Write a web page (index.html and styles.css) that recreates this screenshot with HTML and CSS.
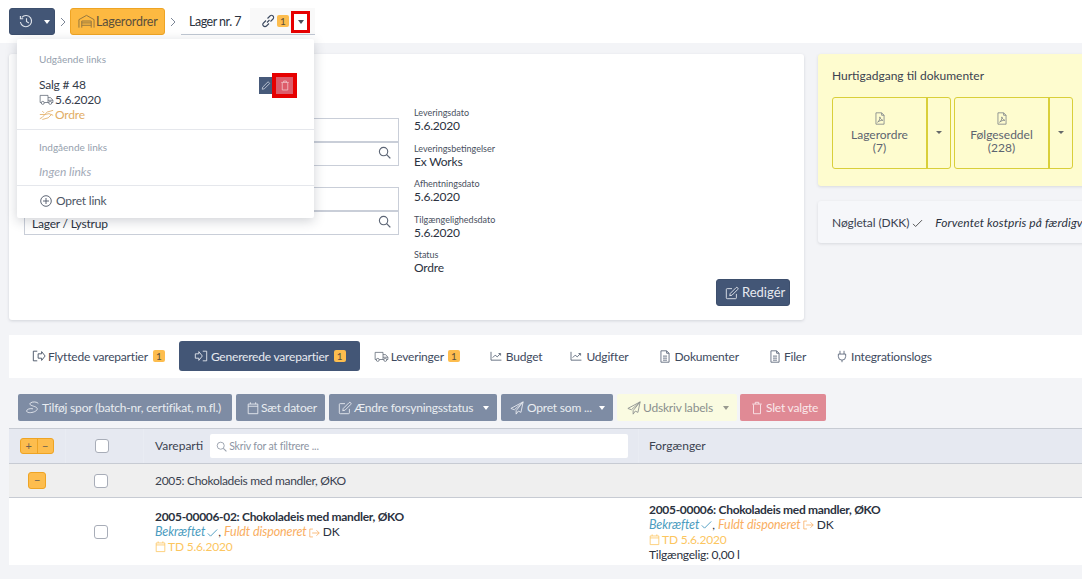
FILE: index.html
```html
<!DOCTYPE html>
<html lang="da">
<head>
<meta charset="utf-8">
<title>Lager nr. 7</title>
<link rel="stylesheet" href="styles.css">
</head>
<body>
<svg width="0" height="0" class="defs">
  <symbol id="i-edit" viewBox="0 0 16 16"><path d="M13 9v4.500a1 1 0 0 1-1 1H2.500a1 1 0 0 1-1-1V4a1 1 0 0 1 1-1H8M6 8.500l-.6 2.600 2.600-.6 6.500-6.500a1.300 1.300 0 0 0-2-2z" fill="none" stroke="currentColor"/></symbol>
  <symbol id="i-truck" viewBox="0 0 20 16"><path d="M3 12H1.500V2.500H12V12H7M12 5.500h3.500l3 3.500v3H17M12 12h1M12 9h6.500" fill="none" stroke="currentColor"/><circle cx="5" cy="12.500" r="2" fill="none" stroke="currentColor"/><circle cx="15" cy="12.500" r="2" fill="none" stroke="currentColor"/></symbol>
  <symbol id="i-cal" viewBox="0 0 14 16"><path d="M1.500 3.500h11v11h-11zM1.500 6h11M4 1.500v2M10 1.500v2" fill="none" stroke="currentColor"/></symbol>
  <symbol id="i-trash" viewBox="0 0 14 16"><path d="M3 4v10.500h8V4M1.500 3.500h11M5 3.500V1.500h4v2" fill="none" stroke="currentColor"/></symbol>
  <symbol id="i-plane" viewBox="0 0 16 16"><path d="M15 1 1 8.500l4 1.500L15 1 7 11v4l2.500-3.500 3 1.500z" fill="none" stroke="currentColor" stroke-linejoin="round"/></symbol>
  <symbol id="i-search" viewBox="0 0 14 14"><circle cx="6" cy="6" r="4.500" fill="none" stroke="currentColor" stroke-width="1.200"/><path d="m9.300 9.300 4 4" stroke="currentColor" stroke-width="1.400"/></symbol>
  <symbol id="i-pdf" viewBox="0 0 12 16"><path d="M1 1h7l3 3v11H1zM8 1v3h3M3 12.500c2-1 3-4 2.800-6.500.8 2.500 1.700 3.700 3.700 4.200-2.500 0-4.500.8-6.500 2.300z" fill="none" stroke="currentColor" stroke-width=".9"/></symbol>
  <symbol id="i-chart" viewBox="0 0 14 12"><path d="M1 1v10h12.500M3 8l3-3 2.500 2L12 3.500M10 3h2.500v2.500" fill="none" stroke="currentColor"/></symbol>
  <symbol id="i-doc" viewBox="0 0 12 16"><path d="M1 1h7l3 3v11H1zM8 1v3h3M3.500 7.500h5M3.500 10h5M3.500 12.500h5" fill="none" stroke="currentColor"/></symbol>
  <symbol id="i-check" viewBox="0 0 14 12"><path d="m1 6.500 3.500 3.500L13 1.500" fill="none" stroke="currentColor" stroke-width="1.200"/></symbol>
  <symbol id="i-exit" viewBox="0 0 14 12"><path d="M5 1H1v10h4M4 6h9M9.500 2.500 13 6 9.500 9.500" fill="none" stroke="currentColor"/></symbol>
  <symbol id="i-hands" viewBox="0 0 18 14"><path d="M1 12c4-1 5-5 9-8l7-2M4 13l7-2 4-4M1 7h6l5-1 5 2M6 5 4 3" fill="none" stroke="currentColor"/></symbol>
  <symbol id="i-chev" viewBox="0 0 6 10"><path d="m1 1 4 4-4 4" fill="none" stroke="currentColor"/></symbol>
</svg>

<header class="topbar">
  <button class="btn btn-dark history">
    <svg class="ico-16" viewBox="0 0 16 16"><path d="M3 3.500a6 6 0 1 1-1.500 5M1.500 2v3h3M8 4.500V8l2.500 1.500" fill="none" stroke="currentColor" stroke-width="1.200"/></svg>
    <span class="caret caret-white"></span>
  </button>
  <span class="chev"><svg class="ico-chev"><use href="#i-chev"/></svg></span>
  <button class="btn btn-orange">
    <svg class="ico-wh" viewBox="0 0 18 15"><path d="M1 14V5.500L9 1l8 4.500V14M4 14V7h10v7M4 9h10M4 11.500h10" fill="none" stroke="currentColor"/></svg>Lagerordrer
  </button>
  <span class="chev"><svg class="ico-chev"><use href="#i-chev"/></svg></span>
  <span class="crumb">Lager nr. 7</span>
  <span class="linktab">
    <svg class="ico-link" viewBox="0 0 14 14"><path d="M6 8.500 8.500 6M5 6.500 2.500 9a2.100 2.100 0 0 0 3 3L8 9.500M6.500 4.500 9 2a2.100 2.100 0 0 1 3 3L9.500 7.500" fill="none" stroke="currentColor" stroke-width="1.100"/></svg>
    <span class="badge">1</span>
    <span class="redbox-caret"><span class="caret caret-dark"></span></span>
  </span>
</header>

<div class="dropdown">
  <div class="dd-sec dd-out">
    <div class="dd-head">Udgående links</div>
    <div class="dd-item">
      <div class="dd-lines">
        <div>Salg # 48</div>
        <div class="dd-date"><svg class="ico-truck"><use href="#i-truck"/></svg>5.6.2020</div>
        <div class="dd-order"><svg class="ico-truck"><use href="#i-hands"/></svg>Ordre</div>
      </div>
      <div class="dd-actions">
        <span class="act act-edit"><svg class="ico-10" viewBox="0 0 12 12"><path d="M1.500 10.500 2 8l6.500-6.500 2 2L4 10z" fill="none" stroke="currentColor"/></svg></span>
        <span class="act act-del"><svg class="ico-10"><use href="#i-trash"/></svg></span>
      </div>
    </div>
  </div>
  <div class="dd-sec dd-in">
    <div class="dd-head">Indgående links</div>
    <div class="dd-none">Ingen links</div>
  </div>
  <div class="dd-create">
    <svg class="ico-12" viewBox="0 0 12 12"><circle cx="6" cy="6" r="5.300" fill="none" stroke="currentColor" stroke-width=".9"/><path d="M6 3v6M3 6h6" stroke="currentColor" stroke-width=".9"/></svg>Opret link
  </div>
</div>

<main class="page">
  <section class="top-row">
    <div class="card main-card">
      <div class="form-col">
        <div class="input-pair">
          <div class="input"></div>
          <div class="input search"><svg class="ico-search"><use href="#i-search"/></svg></div>
        </div>
        <div class="input-pair">
          <div class="input"></div>
          <div class="input search">Lager / Lystrup<svg class="ico-search"><use href="#i-search"/></svg></div>
        </div>
      </div>
      <dl class="facts">
        <div class="fact"><dt>Leveringsdato</dt><dd>5.6.2020</dd></div>
        <div class="fact"><dt>Leveringsbetingelser</dt><dd>Ex Works</dd></div>
        <div class="fact"><dt>Afhentningsdato</dt><dd>5.6.2020</dd></div>
        <div class="fact"><dt>Tilgængelighedsdato</dt><dd>5.6.2020</dd></div>
        <div class="fact"><dt>Status</dt><dd>Ordre</dd></div>
      </dl>
      <button class="btn btn-dark edit-btn"><svg class="ico-14"><use href="#i-edit"/></svg>Redigér</button>
    </div>
    <aside class="side">
      <div class="quick">
        <div class="quick-title">Hurtigadgang til dokumenter</div>
        <div class="quick-btns">
          <div class="doc-btn">
            <div class="doc-main"><svg class="ico-pdf"><use href="#i-pdf"/></svg><span>Lagerordre</span><span>(7)</span></div>
            <div class="doc-caret"><span class="caret caret-doc"></span></div>
          </div>
          <div class="doc-btn">
            <div class="doc-main"><svg class="ico-pdf"><use href="#i-pdf"/></svg><span>Følgeseddel</span><span>(228)</span></div>
            <div class="doc-caret"><span class="caret caret-doc"></span></div>
          </div>
        </div>
      </div>
      <div class="keyfig">Nøgletal (DKK)<svg class="ico-check"><use href="#i-check"/></svg><em>Forventet kostpris på færdigvarer</em></div>
    </aside>
  </section>

  <section class="panel">
    <nav class="tabs">
      <a class="tab tab-first"><svg class="ico-14" viewBox="0 0 16 14"><path d="M6 1.500H1.500v11H6M7 4.500h4V2l4 5-4 5V9.500H7z" fill="none" stroke="currentColor"/></svg>Flyttede varepartier<span class="badge">1</span></a>
      <a class="tab tab-active"><svg class="ico-14" viewBox="0 0 16 14"><path d="M10 1.500h4.500v11H10M1.500 4.500h4V2l4 5-4 5V9.500h-4z" fill="none" stroke="currentColor"/></svg>Genererede varepartier<span class="badge">1</span></a>
      <a class="tab tab-deliv"><svg class="ico-truck ico-tab"><use href="#i-truck"/></svg>Leveringer<span class="badge">1</span></a>
      <a class="tab tab-plain tab-budget"><svg class="ico-chart"><use href="#i-chart"/></svg>Budget</a>
      <a class="tab tab-plain tab-costs"><svg class="ico-chart"><use href="#i-chart"/></svg>Udgifter</a>
      <a class="tab tab-plain tab-docs"><svg class="ico-doc"><use href="#i-doc"/></svg>Dokumenter</a>
      <a class="tab tab-plain tab-docs"><svg class="ico-doc"><use href="#i-doc"/></svg>Filer</a>
      <a class="tab tab-plain tab-last"><svg class="ico-doc" viewBox="0 0 12 16"><path d="M3.500 1v4M8.500 1v4M1.500 5h9v3a4.500 4.500 0 0 1-9 0zM6 12.500V15" fill="none" stroke="currentColor"/></svg>Integrationslogs</a>
    </nav>
    <div class="toolbar">
      <button class="tbtn tbtn-slate tb-trace"><svg class="ico-rope" viewBox="0 0 18 16"><path d="M15 3.500C14 1.500 8 1 6 3s2 3 5 4 4 3 1 5-9 2.500-10 .5 3-4 7-3" fill="none" stroke="currentColor"/></svg>Tilføj spor (batch-nr, certifikat, m.fl.)</button>
      <button class="tbtn tbtn-slate tb-dates"><svg class="ico-14"><use href="#i-cal"/></svg>Sæt datoer</button>
      <button class="tbtn tbtn-slate tb-status"><svg class="ico-14"><use href="#i-edit"/></svg>Ændre forsyningsstatus<span class="caret caret-white tb-caret"></span></button>
      <button class="tbtn tbtn-slate tb-create"><svg class="ico-14"><use href="#i-plane"/></svg>Opret som ...<span class="caret caret-white tb-caret"></span></button>
      <button class="tbtn tbtn-cream tb-labels"><svg class="ico-14"><use href="#i-plane"/></svg>Udskriv labels<span class="caret caret-grey tb-caret"></span></button>
      <button class="tbtn tbtn-red tb-delete"><svg class="ico-14"><use href="#i-trash"/></svg>Slet valgte</button>
    </div>
    <div class="table">
      <div class="row row-head">
        <div class="col-a"><span class="pm"><span>+</span><span>−</span></span></div>
        <div class="col-b"><span class="check"></span></div>
        <div class="col-c head-c"><span class="head-label">Vareparti</span>
          <div class="filter"><svg class="ico-filter"><use href="#i-search"/></svg>Skriv for at filtrere ...</div>
        </div>
        <div class="col-d"><span class="head-label">Forgænger</span></div>
      </div>
      <div class="row row-group">
        <div class="col-a"><span class="pm pm-single">−</span></div>
        <div class="col-b"><span class="check"></span></div>
        <div class="col-c">2005: Chokoladeis med mandler, ØKO</div>
      </div>
      <div class="row row-item">
        <div class="col-a"></div>
        <div class="col-b"><span class="check"></span></div>
        <div class="col-c item">
          <strong>2005-00006-02: Chokoladeis med mandler, ØKO</strong>
          <div><em class="blue">Bekræftet<svg class="ico-status"><use href="#i-check"/></svg></em>, <em class="orange">Fuldt disponeret<svg class="ico-status"><use href="#i-exit"/></svg></em> DK</div>
          <div class="yellow"><svg class="ico-cal"><use href="#i-cal"/></svg>TD 5.6.2020</div>
        </div>
        <div class="col-d item">
          <strong>2005-00006: Chokoladeis med mandler, ØKO</strong>
          <div><em class="blue">Bekræftet<svg class="ico-status"><use href="#i-check"/></svg></em>, <em class="orange">Fuldt disponeret<svg class="ico-status"><use href="#i-exit"/></svg></em> DK</div>
          <div class="yellow"><svg class="ico-cal"><use href="#i-cal"/></svg>TD 5.6.2020</div>
          <div class="avail">Tilgængelig: 0,00 l</div>
        </div>
      </div>
    </div>
  </section>
</main>
</body>
</html>
```

FILE: styles.css
```css
* { box-sizing: border-box; }
html, body { margin: 0; height: 100%; overflow: hidden; }
body {
  position: relative;
  background: #f3f4f7;
  font-family: Lato, "Liberation Sans", sans-serif;
  font-size: 12px;
  line-height: 15px;
  color: #2b3240;
}
.defs { position: absolute; }
svg { flex: none; display: inline-block; vertical-align: middle; }
button { font: inherit; border: 0; padding: 0; }

.ico-16 { width: 15px; height: 15px; }
.ico-14 { width: 14px; height: 14px; }
.ico-12 { width: 12px; height: 12px; }
.ico-10 { width: 10px; height: 11px; }

/* Top bar */
.topbar {
  height: 43px;
  background: #fff;
  display: flex;
  align-items: flex-start;
  padding: 8px 0 0 9px;
}
.btn {
  display: inline-flex;
  align-items: center;
  height: 27px;
  border-radius: 3px;
  font-size: 13px;
}
.btn-dark { background: #435676; color: #fff; border: 1px solid #3d4f6d; }
.history { width: 46px; padding-left: 9px; gap: 10px; color: #dfe3ea; }
.btn-orange {
  width: 95px;
  background: #fdb941;
  border: 1px solid #eea424;
  color: #5b4f3c;
  font-size: 12.500px;
  letter-spacing: -.2px;
  padding-left: 7px;
  gap: 1px;
}
.ico-wh { width: 17px; height: 15px; color: #8e7440; }
.chev {
  width: 15px;
  height: 27px;
  display: flex;
  align-items: center;
  justify-content: center;
  color: #7d8797;
}
.ico-chev { width: 6px; height: 10px; }
.caret {
  display: inline-block;
  width: 0;
  height: 0;
  border-left: 3.500px solid transparent;
  border-right: 3.500px solid transparent;
  border-top: 4px solid #444;
}
.caret-white { border-top-color: #fff; }
.caret-grey { border-top-color: #98998f; }
.caret-dark { border-top-color: #4a4f5a; }
.caret-doc {
  border-left-width: 3px;
  border-right-width: 3px;
  border-top: 3px solid #66696a;
}
.crumb {
  margin-left: 1px;
  width: 69px;
  height: 27px;
  line-height: 27px;
  padding-left: 8px;
  font-size: 12.500px;
  letter-spacing: -.5px;
  border-bottom: 1px solid #c0c7d3;
}
.linktab {
  width: 65px;
  height: 27px;
  background: #f9f9f9;
  border-bottom: 1px solid #c0c7d3;
  display: flex;
  align-items: center;
  padding-left: 11px;
  position: relative;
}
.ico-link { width: 14px; height: 14px; color: #3d4a60; }
.badge {
  display: inline-block;
  flex: none;
  width: 12px;
  height: 12px;
  margin-left: 2px;
  border-radius: 2px;
  background: #fdbd4e;
  color: #5b4f3c;
  font-size: 10px;
  letter-spacing: 0;
  line-height: 12px;
  text-align: center;
}
.redbox-caret {
  position: absolute;
  left: 41px;
  top: 3px;
  width: 19px;
  height: 22px;
  background: #fff;
  border: 3px solid #e60000;
  display: flex;
  align-items: center;
  justify-content: center;
}

/* Dropdown */
.dropdown {
  position: absolute;
  left: 17px;
  top: 39px;
  width: 297px;
  height: 179px;
  background: #fff;
  border-radius: 2px;
  box-shadow: 0 3px 12px rgba(40, 50, 70, .22);
  z-index: 5;
  font-size: 12px;
  display: flex;
  flex-direction: column;
}
.dd-sec { padding: 13px 22px 0; border-bottom: 1px solid #e5e7ec; }
.dd-out { height: 91px; }
.dd-in { height: 56px; padding-top: 10px; }
.dd-head { font-size: 10px; color: #969fae; line-height: 14px; }
.dd-item {
  display: flex;
  justify-content: space-between;
  margin-top: 11px;
  color: #333b4a;
  letter-spacing: -.2px;
}
.dd-lines { line-height: 15px; }
.dd-date { display: flex; align-items: center; gap: 1px; }
.dd-order { display: flex; align-items: center; gap: 1px; color: #e2ad64; }
.ico-truck { width: 15px; height: 13px; color: #5b6472; }
.dd-order .ico-truck { color: #e2ad64; }
.dd-actions { display: flex; margin: 0 -5px 0 0; height: 17px; }
.act { width: 17px; height: 17px; display: flex; align-items: center; justify-content: center; }
.act-edit { background: #475a7a; color: #c9d0dc; width: 13px; }
.act-del {
  width: 25px;
  height: 25px;
  margin-top: -4px;
  border: 4px solid #e60000;
  background: #dd5c6a;
  color: #f6d5d8;
}
.dd-none { font-style: italic; color: #a2aab7; margin-top: 10px; }
.dd-create {
  display: flex;
  align-items: center;
  gap: 4px;
  padding: 7px 23px;
  color: #4d5666;
  letter-spacing: -.2px;
}

/* Main */
.page { padding: 11px 0 0 9px; width: 1200px; }
.top-row { display: flex; gap: 14px; align-items: flex-start; }
.card {
  background: #fff;
  border-radius: 3px;
  box-shadow: 0 1px 3px rgba(60, 70, 90, .18);
}
.main-card {
  width: 795px;
  height: 266px;
  display: flex;
  position: relative;
  padding-left: 15px;
}
.form-col { width: 375px; padding-top: 64px; }
.input-pair { margin-bottom: 21px; }
.input {
  height: 24px;
  border: 1px solid #c9ced8;
  position: relative;
  padding: 4px 0 0 7px;
  font-size: 12px;
  letter-spacing: -.2px;
  line-height: 16px;
  color: #2b3240;
}
.ico-search {
  position: absolute;
  right: 7px;
  top: 3px;
  width: 13px;
  height: 13px;
  color: #5c6575;
}
.facts { margin: 53px 0 0 15px; }
.fact { height: 35.500px; }
.fact dt { font-size: 9px; line-height: 12px; color: #49505e; }
.fact dd { margin: 0; font-size: 12px; letter-spacing: -.2px; line-height: 13px; color: #2b3240; }
.edit-btn {
  position: absolute;
  right: 14px;
  bottom: 14px;
  width: 74px;
  padding-left: 8px;
  gap: 3px;
  color: #e7eaf0;
}

/* Side */
.side { width: 370px; display: flex; flex-direction: column; gap: 15px; }
.quick {
  height: 132px;
  background: #fefccf;
  border-radius: 3px;
  box-shadow: 0 1px 3px rgba(60, 70, 90, .15);
  padding: 14px 14px;
}
.quick-title { font-size: 12px; color: #3b4250; }
.quick-btns { display: flex; gap: 3px; margin-top: 14px; }
.doc-btn {
  display: flex;
  width: 119px;
  height: 72px;
  border: 1px solid #d9cf3a;
  border-radius: 3px;
}
.doc-main {
  width: 95px;
  display: flex;
  flex-direction: column;
  align-items: center;
  padding-top: 14px;
  color: #5d6470;
  font-size: 12px;
  line-height: 13px;
  border-right: 2px solid #d9cf3a;
}
.ico-pdf { width: 10px; height: 13px; color: #6f7680; margin-bottom: 3px; }
.doc-caret { flex: 1; display: flex; justify-content: center; padding-top: 33px; }
.keyfig {
  height: 42px;
  background: #f6f7fa;
  border-radius: 3px;
  box-shadow: 0 1px 3px rgba(60, 70, 90, .15);
  padding: 14px;
  white-space: nowrap;
  font-size: 12px;
  letter-spacing: -.1px;
  color: #3b4250;
}
.keyfig em { color: #2b3240; letter-spacing: .1px; }
.ico-check { width: 11px; height: 9px; margin: 0 12px 0 3px; color: #444; }

/* Panel */
.panel { margin-top: 15px; }
.tabs {
  height: 43px;
  background: #fff;
  display: flex;
  align-items: flex-start;
  padding: 6px 0 0 8px;
  color: #3e4a5e;
  font-size: 12px;
  letter-spacing: -.2px;
}
.tab {
  display: flex;
  align-items: center;
  height: 30px;
  padding: 0 14px 0 15px;
  gap: 1px;
  border-radius: 3px;
  white-space: nowrap;
}
.tab > svg:first-child { margin-right: 1px; }
.tab .badge { margin-left: 3px; }
.tab-first .badge { margin-left: 4px; }
.tab-active { background: #435676; color: #e7eaf0; padding-right: 14px; gap: 2px; }
.tab-deliv { padding-left: 14px; padding-right: 15px; gap: 1px; }
.tab-plain { padding: 0 14px 0 15px; gap: 3px; }
.tab-budget { padding-right: 13px; }
.tab-costs { padding-right: 17px; }
.tab-docs { padding-right: 16px; }
.tab-last { padding-left: 15px; }
.tab-plain .ico-doc { margin-right: 1px; }
.ico-tab { width: 15px; height: 13px; }
.ico-chart { width: 12px; height: 10px; color: #4f5b70; }
.ico-doc { width: 10px; height: 13px; color: #4f5b70; }

.toolbar {
  display: flex;
  gap: 4px;
  padding: 16px 0 7px 9px;
  height: 50px;
  letter-spacing: -.2px;
}
.tbtn {
  height: 27px;
  display: inline-flex;
  align-items: center;
  padding-left: 8px;
  gap: 2px;
  border-radius: 2px;
  font-size: 12px;
  letter-spacing: -.2px;
  white-space: nowrap;
}
.tb-trace { width: 214px; padding-left: 7px; gap: 1px; }
.tb-trace .ico-rope { width: 16px; }
.tb-dates { width: 89px; padding-left: 10px; gap: 1px; }
.tb-status { width: 168px; padding-left: 9px; gap: 2px; }
.tb-create { width: 112px; padding-left: 9px; gap: 3px; }
.tb-labels { width: 120px; padding-left: 10px; gap: 2px; }
.tb-delete { width: 86px; padding-left: 10px; gap: 2px; }
.tb-caret { margin-left: auto; margin-right: 8px; }
.tbtn-slate { background: #7e8ca4; color: #e9ecf1; }
.tbtn-cream { background: #fafbe1; color: #8a8f8e; }
.tbtn-red { background: #e08a95; color: #fae8ea; margin-left: -1px; }
.ico-rope { width: 17px; height: 15px; }

.row { display: flex; }
.col-a { width: 56px; display: flex; align-items: center; justify-content: center; flex: none; }
.col-b { width: 78px; display: flex; align-items: center; justify-content: center; padding-right: 6px; flex: none; }
.col-c { width: 495px; padding-left: 12px; flex: none; }
.col-d { flex: 1; padding-left: 11px; }
.row-head {
  height: 36px;
  background: #e6e9f1;
  border-top: 1px solid #c7cbd3;
  border-bottom: 1px solid #c7cbd3;
  align-items: stretch;
  color: #3b4250;
}
.row-head > div { display: flex; align-items: center; }
.row-head .col-b, .row-head .col-c, .row-head .col-d { border-left: 1px solid #e9ecf3; }
.row-head .col-d { padding-left: 10px; }
.head-label { position: relative; top: -1px; }
.head-c { gap: 7px; padding-left: 11px; }
.filter {
  width: 418px;
  height: 24px;
  background: #fff;
  border-radius: 2px;
  display: flex;
  align-items: center;
  gap: 2px;
  padding-left: 6px;
  font-size: 10.500px;
  letter-spacing: -.15px;
  color: #8d95a3;
}
.ico-filter { width: 11px; height: 11px; color: #9aa1ad; }
.row-group {
  height: 34px;
  background: #efefef;
  border-bottom: 1px solid #c7cbd3;
  align-items: center;
  color: #3b4250;
  letter-spacing: -.32px;
}
.row-item { height: 67px; background: #fff; align-items: center; }
.item { color: #2b3240; line-height: 15px; }
.item strong { font-weight: 700; display: block; font-size: 12px; letter-spacing: -.3px; }
.item em { font-size: 12.500px; letter-spacing: -.1px; }
.avail { letter-spacing: -.25px; }
.pm {
  display: inline-flex;
  width: 34px;
  height: 16px;
  background: #fdbd4e;
  border: 1px solid #eea424;
  border-radius: 3px;
  color: #6d6250;
  font-size: 11px;
  line-height: 13px;
}
.pm span { flex: 1; text-align: center; }
.pm span + span { border-left: 1px solid #eea424; }
.pm-single { width: 18px; height: 17px; display: block; text-align: center; }
.check {
  display: block;
  width: 14px;
  height: 14px;
  background: #fff;
  border: 1px solid #a8adb8;
  border-radius: 3px;
}
.blue { color: #4b9cc0; }
.orange { color: #f9ae62; }
.yellow { color: #fcc65f; display: flex; align-items: center; gap: 2px; letter-spacing: -.2px; }
.ico-status { width: 11px; height: 10px; margin-left: 2px; }
.ico-cal { width: 11px; height: 13px; }
```
